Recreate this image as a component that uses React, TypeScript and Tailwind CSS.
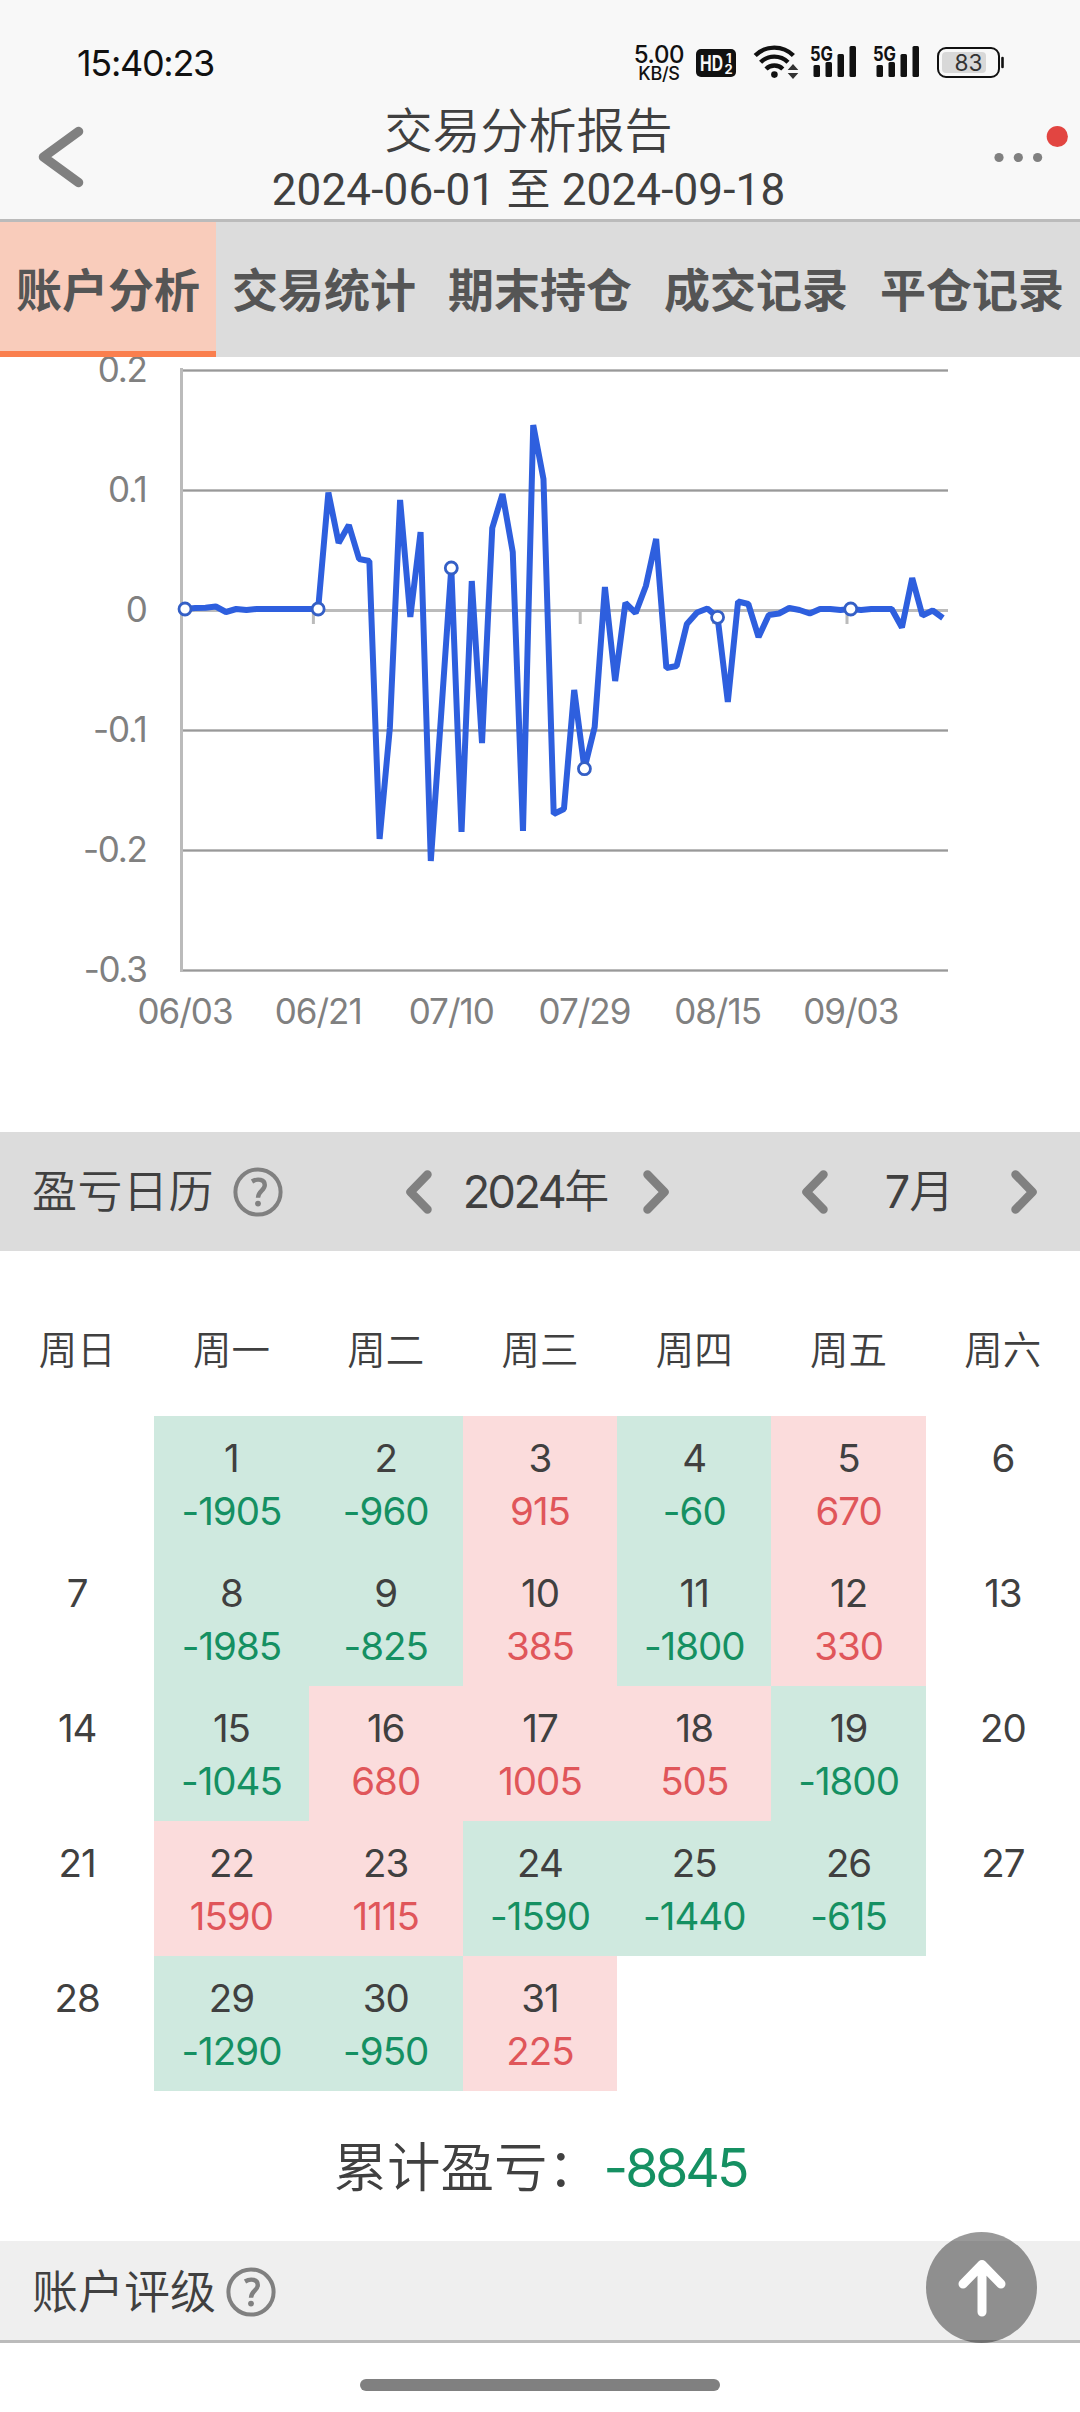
import React from 'react';
import clsx from 'clsx';

const TABS = ['账户分析', '交易统计', '期末持仓', '成交记录', '平仓记录'];
const WEEKDAYS = ['周日', '周一', '周二', '周三', '周四', '周五', '周六'];

// profit per trading day, July 2024
const PROFITS: Record<number, number> = {
  1: -1905, 2: -960, 3: 915, 4: -60, 5: 670,
  8: -1985, 9: -825, 10: 385, 11: -1800, 12: 330,
  15: -1045, 16: 680, 17: 1005, 18: 505, 19: -1800,
  22: 1590, 23: 1115, 24: -1590, 25: -1440, 26: -615,
  29: -1290, 30: -950, 31: 225,
};

// line heights on the chart canvas, one per trading day
const SERIES = [
  609, 608, 607.7, 606.5, 612, 609, 610, 609, 609, 609, 609, 609, 609, 609,
  492.5, 543, 525, 559, 561, 839, 728, 500, 617, 532, 861, 716, 568, 832, 581, 743,
  528, 494, 552, 831, 425, 479, 814, 809, 690, 768.7, 727, 587, 681, 603, 613, 586,
  539, 668, 666, 624, 612.5, 608.5, 617.3, 702, 601.5, 604, 637, 615, 613.5, 608, 610, 613.5,
  609, 609, 610, 609, 610, 609, 609, 609, 627.5, 578, 615.5, 610.5, 618,
];
const STEP = 10.242;
const xAt = (i: number) => 185 + i * STEP;

const Y_TICKS = ['0.2', '0.1', '0', '-0.1', '-0.2', '-0.3'];
const X_TICKS = ['06/03', '06/21', '07/10', '07/29', '08/15', '09/03'];

function SignalIcon() {
  return (
    <svg width="48" height="34" viewBox="0 0 48 34" fill="#111">
      <text x="0" y="17.5" fontSize="20" fontWeight="700" textLength="23" lengthAdjust="spacingAndGlyphs">5G</text>
      <rect x="3.5" y="22" width="6.5" height="12" rx="1.5" />
      <rect x="15.5" y="19" width="6.5" height="15" rx="1.5" />
      <rect x="27.5" y="11" width="6.5" height="23" rx="1.5" />
      <rect x="39.5" y="3" width="6.5" height="31" rx="1.5" />
    </svg>
  );
}

function StatusBar() {
  return (
    <div className="flex h-[102px] items-start pl-[77px] text-[#111]">
      <span className="mt-[44px] w-[556px] text-[36px] leading-[38px] tracking-[-1.3px]">15:40:23</span>
      <div className="mt-[42px] flex w-[52px] flex-col items-center font-medium">
        <span className="text-[24px] leading-[25px] tracking-[-0.3px]">5.00</span>
        <span className="text-[18px] leading-[14px] tracking-[-0.3px]">KB/S</span>
      </div>
      <svg className="mt-[49px] ml-[11px]" width="40" height="28" viewBox="0 0 40 28">
        <rect width="40" height="28" rx="5" fill="#111" />
        <text x="4" y="22" fontSize="21" fontWeight="700" fill="#f8f8f8" textLength="23" lengthAdjust="spacingAndGlyphs">HD</text>
        <text x="30" y="13.5" fontSize="13" fontWeight="700" fill="#f8f8f8">1</text>
        <text x="28.5" y="25" fontSize="13" fontWeight="700" fill="#f8f8f8">2</text>
      </svg>
      <svg className="mt-[44px] ml-[17px]" width="46" height="35" viewBox="0 0 46 35" fill="none" stroke="#111" strokeWidth="4.4">
        <path d="M2.2 11.5a27 27 0 0 1 38.2 0" />
        <path d="M7.6 18.2a19.5 19.5 0 0 1 27.4 0" />
        <path d="M13 25a12 12 0 0 1 16.8 0" />
        <circle cx="21.4" cy="30.6" r="3.3" fill="#111" stroke="none" />
        <path d="M40 20l5.300 6h-10.600zM40 35l5.300-6h-10.600z" fill="#333" stroke="none" />
      </svg>
      <div className="mt-[43px] ml-[11px] flex gap-[15px]">
        <SignalIcon />
        <SignalIcon />
      </div>
      <svg className="mt-[47px] ml-[16px]" width="68" height="31" viewBox="0 0 68 31">
        <rect x="1" y="1" width="61" height="29" rx="8" fill="none" stroke="#111" strokeWidth="2" />
        <rect x="5" y="5" width="44" height="21" rx="4" fill="#d8d8d8" />
        <path d="M65.5 11v9" stroke="#111" strokeWidth="2.6" strokeLinecap="round" />
        <text x="31.5" y="23.5" fontSize="23" textAnchor="middle" fill="#333" textLength="28" lengthAdjust="spacingAndGlyphs">83</text>
      </svg>
    </div>
  );
}

function TitleBar() {
  return (
    <div className="grid h-[117px] grid-cols-[200px_1fr_200px] items-start text-[#404040]">
      <svg className="mt-[24px] ml-[38px]" width="46" height="62" viewBox="0 0 46 62" fill="none" stroke="#808080" strokeWidth="9.5" strokeLinecap="round" strokeLinejoin="round">
        <path d="M40.500 5.500L5.500 31l35 25.500" />
      </svg>
      <div className="-ml-[23px] flex flex-col items-center">
        <h1 className="h-[59px] text-[48px] leading-[58px] font-[350]">交易分析报告</h1>
        <p className="h-[58px] font-[Roboto,'Noto_Sans_CJK_SC',sans-serif] text-[44px] leading-[58px] tracking-[0.15px] whitespace-nowrap">2024-06-01 至 2024-09-18</p>
      </div>
      <svg className="mt-[20px] ml-[110px]" width="78" height="45" viewBox="0 0 78 45">
        <g fill="#808080">
          <circle cx="9" cy="35.5" r="4.6" />
          <circle cx="28.3" cy="35.5" r="4.6" />
          <circle cx="47.6" cy="35.5" r="4.6" />
        </g>
        <circle cx="67.3" cy="14.5" r="10.6" fill="#e24541" />
      </svg>
    </div>
  );
}

function ReturnChart() {
  const points = SERIES.map((y, i) => `${xAt(i)},${y}`).join(' ');
  return (
    <svg className="block" width="1080" height="775" viewBox="0 357 1080 775">
      {Y_TICKS.map((label, i) => {
        const y = 370.5 + i * 120;
        return (
          <g key={label}>
            <path d={`M180 ${y}H948`} stroke="#bbb" strokeWidth="3" />
            {label !== '0' && <path d={`M183 ${y}H948`} stroke="#999" strokeWidth="1" />}
            <text x="146.5" y={y + 11.5} textAnchor="end" fontSize="35" letterSpacing="-1.3" fill="#808080">
              {label}
            </text>
          </g>
        );
      })}
      <path d="M181.5 368V972" stroke="#bbb" strokeWidth="3" />
      {X_TICKS.map((label, i) => (
        <g key={label}>
          {i > 0 && <path d={`M${180 + i * 133.4} 611v13`} stroke="#bbb" strokeWidth="3" />}
          <text x={xAt(i * 13)} y="1024" textAnchor="middle" fontSize="35" letterSpacing="-1" fill="#808080">
            {label}
          </text>
        </g>
      ))}
      <polyline points={points} fill="none" stroke="#2e5fde" strokeWidth="6" strokeLinejoin="bevel" />
      {X_TICKS.map((label, i) => (
        <circle key={label} cx={xAt(i * 13)} cy={SERIES[i * 13]} r="6" fill="#fff" stroke="#345fc6" strokeWidth="2.8" />
      ))}
    </svg>
  );
}

function HelpIcon({ className }: { className?: string }) {
  return (
    <svg className={className} width="50" height="50" viewBox="0 0 50 50">
      <circle cx="25" cy="25" r="22.6" fill="none" stroke="#808080" strokeWidth="4" />
      <path d="M19 14.500c6-3.600 12.800-1.600 12.800 3.500 0 5.500-6.800 6-6.800 12.800" fill="none" stroke="#808080" strokeWidth="4.4" />
      <circle cx="25" cy="36.6" r="2.9" fill="#808080" />
    </svg>
  );
}

function Chevron({ flip }: { flip?: boolean }) {
  return (
    <svg className={clsx('shrink-0', flip && 'rotate-180')} width="26" height="44" viewBox="0 0 26 44" fill="none" stroke="#808080" strokeWidth="8.5" strokeLinecap="round" strokeLinejoin="round">
      <path d="M21.500 4.500L4.500 22l17 17.500" />
    </svg>
  );
}

function DayCell({ day }: { day: number | null }) {
  const profit = day ? PROFITS[day] : undefined;
  const loss = profit !== undefined && profit < 0;
  return (
    <div
      className={clsx(
        'flex h-[135px] flex-col items-center pt-[16px] text-[38.5px] leading-[53px] tracking-[-1px]',
        profit !== undefined && (loss ? 'bg-[#cfe9df]' : 'bg-[#fbdcdc]')
      )}
    >
      <span className="text-[#404040]">{day}</span>
      {profit !== undefined && (
        <span className={loss ? 'text-[#159062]' : 'text-[#e0565a]'}>{profit}</span>
      )}
    </div>
  );
}

export default function App() {
  // the month starts on a Monday, so Sunday of the first week stays empty
  const days = [null, ...Array.from({ length: 31 }, (_, i) => i + 1)];
  const total = Object.values(PROFITS).reduce((a, b) => a + b, 0);

  return (
    <div className="relative h-[2412px] w-[1080px] overflow-hidden bg-white font-[Inter,'Noto_Sans_CJK_SC',sans-serif]">
      <header className="h-[222px] border-b-[3px] border-[#bbb] bg-[#f8f8f8]">
        <StatusBar />
        <TitleBar />
      </header>

      <nav className="grid h-[135px] grid-cols-5 bg-[#dcdcdc]">
        {TABS.map((tab, i) => (
          <div
            key={tab}
            className={clsx(
              'flex items-center justify-center border-b-[6px] pt-[6px] text-[46px] leading-none font-bold whitespace-nowrap text-[#555]',
              i === 0 ? 'border-[#fa7f4e] bg-[#f9ccbb]' : 'border-transparent'
            )}
          >
            {tab}
          </div>
        ))}
      </nav>

      <ReturnChart />

      <div className="flex h-[119px] items-center bg-[#dcdcdc] pl-[32px] text-[45px] leading-none font-[350] text-[#404040]">
        <span className="w-[201px] tracking-[0.5px]">盈亏日历</span>
        <HelpIcon />
        <div className="ml-[123px] flex w-[263px] items-center justify-between">
          <Chevron />
          <span className="-ml-[3px]">
            <span className="font-normal tracking-[-2.5px]">2024</span>年
          </span>
          <Chevron flip />
        </div>
        <div className="ml-[133px] flex w-[235px] items-center justify-between">
          <Chevron />
          <span>
            <span className="font-normal tracking-[-1px]">7</span>月
          </span>
          <Chevron flip />
        </div>
      </div>

      <div className="grid h-[165px] grid-cols-7 pt-[70px] text-center text-[38.5px] leading-[58px] font-[350] text-[#404040]">
        {WEEKDAYS.map((name) => (
          <span key={name}>{name}</span>
        ))}
      </div>

      <div className="grid grid-cols-7">
        {days.map((day, i) => (
          <DayCell key={i} day={day} />
        ))}
      </div>

      <div className="flex h-[150px] items-center justify-center pt-[4px] text-[53.5px] leading-none font-[350] text-[#404040]">
        <span>累计盈亏</span>
        <span className="w-[54px]">：</span>
        <span className="ml-[2px] font-normal tracking-[-3px] text-[#159062]">{total}</span>
      </div>

      <div className="flex h-[102px] items-center border-b-[3px] border-[#bbb] bg-[#efefef] pl-[32px] text-[46px] leading-none font-[350] text-[#404040]">
        <span className="w-[194px]">账户评级</span>
        <HelpIcon className="mt-[3px]" />
      </div>

      <div className="flex h-[69px] items-center justify-center pt-[15px]">
        <div className="h-[12px] w-[360px] rounded-full bg-[#808080]" />
      </div>

      {/* back to top */}
      <button className="absolute top-[2232px] left-[926px] flex h-[111px] w-[111px] items-center justify-center rounded-full bg-black/40">
        <svg width="48" height="58" viewBox="0 0 48 58" fill="none" stroke="#fff" strokeWidth="9" strokeLinecap="round" strokeLinejoin="round">
          <path d="M24 53V5.500M5 25L24 5.500 43 25" />
        </svg>
      </button>
    </div>
  );
}
